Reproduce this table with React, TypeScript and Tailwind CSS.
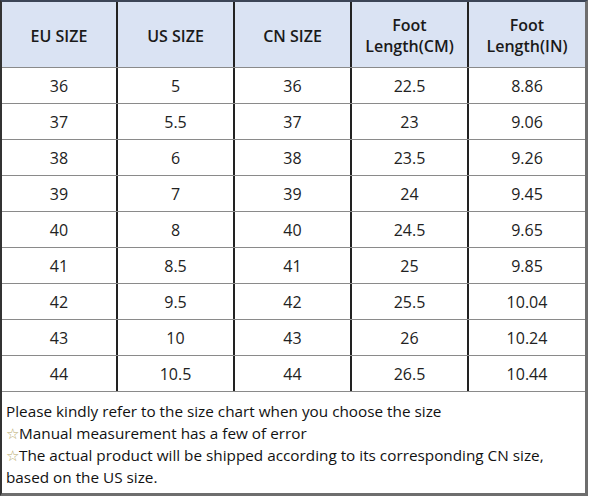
import React from "react";

const rows = [
  ["36", "5", "36", "22.5", "8.86"],
  ["37", "5.5", "37", "23", "9.06"],
  ["38", "6", "38", "23.5", "9.26"],
  ["39", "7", "39", "24", "9.45"],
  ["40", "8", "40", "24.5", "9.65"],
  ["41", "8.5", "41", "25", "9.85"],
  ["42", "9.5", "42", "25.5", "10.04"],
  ["43", "10", "43", "26", "10.24"],
  ["44", "10.5", "44", "26.5", "10.44"],
];

const headers = ["EU SIZE", "US SIZE", "CN SIZE", "Foot\nLength(CM)", "Foot\nLength(IN)"];

const App = () => {
  return (
    <div
      className="w-[592px] h-[499px] bg-white"
      style={{ fontFamily: '"Open Sans", "Noto Sans", sans-serif' }}
    >
      <div className="w-[588px] border-t-2 border-l-2 border-r-[3px] border-b-[3px] border-t-[#3c4556] border-l-[#333] border-r-[#6e6e6e] border-b-[#6e6e6e]">
        <div className="grid grid-cols-[116px_117px_117px_117px_116px] h-[66px] bg-[#dae3f3] border-b border-[#8a8a8a]">
          {headers.map((h, i) => (
            <div
              key={h}
              className={`flex items-center justify-center pt-[3px] text-center whitespace-pre-line text-[16px] leading-[21px] font-semibold text-[#1a1a1a] ${
                i < 4 ? "border-r-2 border-[#222]" : ""
              }`}
            >
              {h}
            </div>
          ))}
        </div>
        {rows.map((r, ri) => (
          <div
            key={ri}
            className="grid grid-cols-[116px_117px_117px_117px_116px] h-[36px] border-b border-[#8a8a8a]"
          >
            {r.map((c, i) => (
              <div
                key={i}
                className={`flex items-center justify-center pt-px text-[16px] text-[#222] ${
                  i < 4 ? "border-r-2 border-[#222]" : ""
                }`}
              >
                {c}
              </div>
            ))}
          </div>
        ))}
        <div className="h-[101px] pl-[4px] pt-[8px] text-[15.3px] leading-[22px] text-[#111]">
          <p>Please kindly refer to the size chart when you choose the size</p>
          <p>
            <span className="text-[#b8a968]">☆</span>Manual measurement has a few of error
          </p>
          <p>
            <span className="text-[#b8a968]">☆</span>The actual product will be shipped according to its corresponding CN size,
          </p>
          <p>based on the US size.</p>
        </div>
      </div>
    </div>
  );
};

export default App;
